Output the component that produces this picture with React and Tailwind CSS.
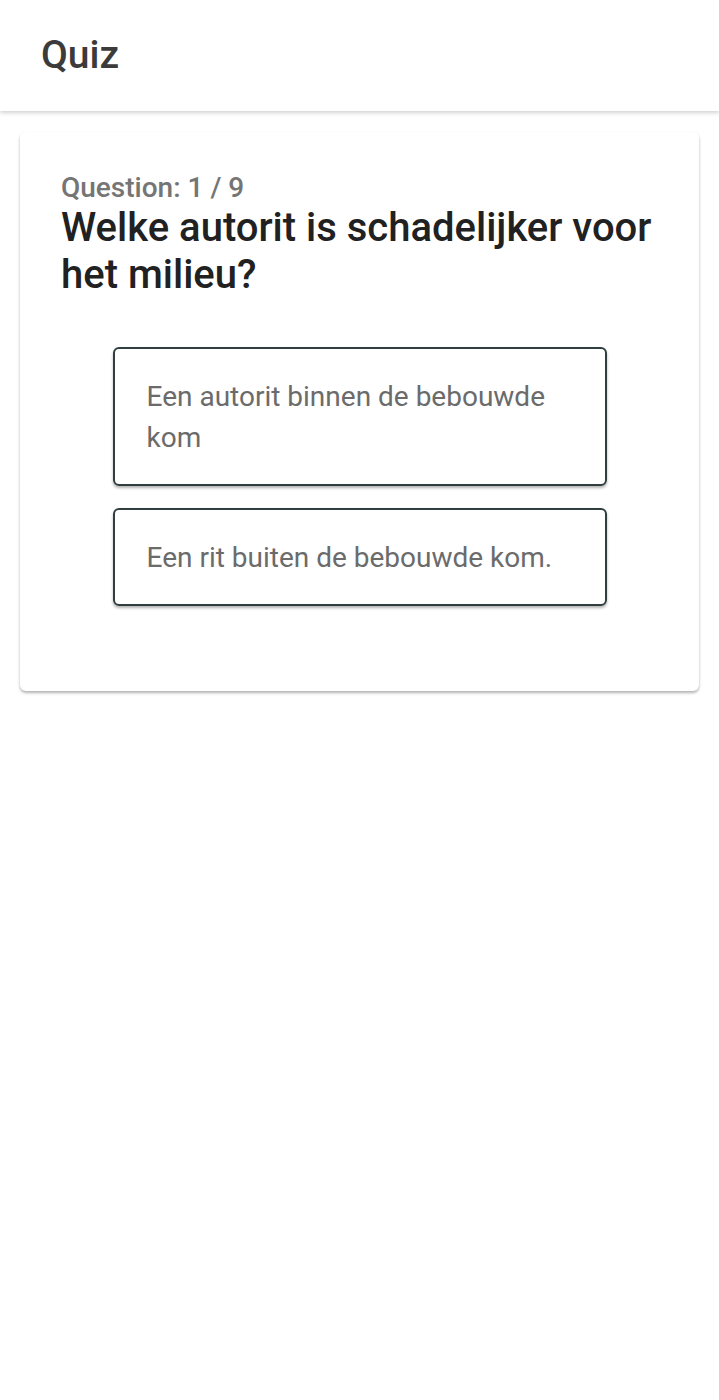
import React from "react";

const answers = ["Een autorit binnen de bebouwde kom", "Een rit buiten de bebouwde kom."];

const App = () => {
    return (
        <div className="min-h-[1400px] bg-white font-['Roboto',sans-serif]">
            {/* Top bar */}
            <header className="h-[111px] bg-white flex items-center px-[41px] shadow-[0_2px_4px_rgba(0,0,0,0.18)]">
                <h1 className="text-[39px] font-medium text-[#3b3b3b] leading-none">Quiz</h1>
            </header>

            {/* Question card */}
            <div className="px-5 pt-[21px]">
                <div className="bg-white rounded-md shadow-[0_2px_3px_rgba(0,0,0,0.3)] px-[41px] pt-[40px] pb-[85px]">
                    <p className="text-[28px] font-medium text-[#757575] leading-[32px]">Question: 1 / 9</p>
                    <h2 className="text-[40px] font-medium text-[#212121] leading-[47px]">
                        Welke autorit is schadelijker voor het milieu?
                    </h2>

                    <div className="mt-[49px] flex flex-col gap-[22px] items-center">
                        {answers.map((a) => (
                            <button
                                key={a}
                                className="w-[494px] text-left border-2 border-[#303e40] rounded-md shadow-[0_2px_3px_rgba(0,0,0,0.3)] px-[32px] py-[26.5px] text-[28px] leading-[41px] text-[#6b6b6b]"
                            >
                                {a}
                            </button>
                        ))}
                    </div>
                </div>
            </div>
        </div>
    );
};

export default App;
